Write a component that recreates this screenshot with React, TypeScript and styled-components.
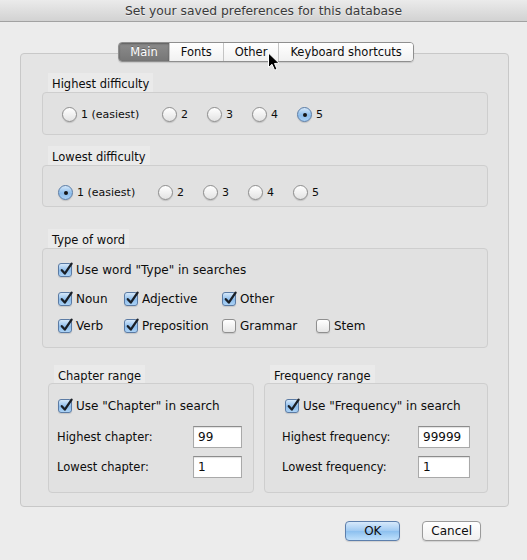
import styled, { createGlobalStyle, css } from 'styled-components';

// #region StyledComponents

const GlobalStyle = createGlobalStyle`
  *, *::before, *::after {
    box-sizing: border-box;
  }
  html, body {
    margin: 0;
    padding: 0;
    background: #ececec;
  }
  body {
    font-family: "DejaVu Sans", "Liberation Sans", sans-serif;
    color: #0d0d0d;
  }
`;

const WindowStyled = styled.div`
  position: relative;
  width: 527px;
  height: 560px;
  overflow: hidden;
  background: #ececec;
`;

const TitleBarStyled = styled.div`
  height: 22px;
  display: flex;
  align-items: center;
  justify-content: center;
  border-bottom: 1px solid #a2a2a2;
  background: linear-gradient(#ebebeb, #d2d2d2);
  font-size: 12.3px;
  color: #3a3a3a;
  text-shadow: 0 1px 0 rgba(255, 255, 255, 0.55);
`;

const ContentStyled = styled.div`
  padding: 20px 18px 0 20px;
`;

const TabStripStyled = styled.div`
  position: relative;
  z-index: 1;
  display: flex;
  justify-content: center;
  padding-left: 3px;
  margin-bottom: -9px;
`;

const TabGroupStyled = styled.div`
  display: flex;
  height: 20px;
  border: 1px solid #8f8f8f;
  border-radius: 4px;
  overflow: hidden;
  box-shadow: 0 1px 1px rgba(0, 0, 0, 0.12);
`;

const TabStyled = styled.div<{ $active?: boolean }>`
  padding: 0 11px;
  line-height: 18px;
  font-size: 11.5px;
  color: #0d0d0d;
  background: linear-gradient(#ffffff, #f1f1f1);
  & + & {
    border-left: 1px solid #c4c4c4;
  }
  ${(p) =>
    p.$active &&
    css`
      color: #fff;
      background: linear-gradient(#8c8c8c, #767676);
      box-shadow: inset 0 1px 2px rgba(0, 0, 0, 0.35);
      text-shadow: 0 -1px 0 rgba(0, 0, 0, 0.25);
    `}
`;

const TabBoxStyled = styled.div`
  border: 1px solid #c8c8c8;
  border-radius: 4px;
  background: #e4e4e4;
  padding: 19px 20px 13px 21px;
`;

const SectionStyled = styled.div<{ $gap?: number }>`
  display: flex;
  flex-direction: column;
  margin-top: ${(p) => p.$gap ?? 0}px;
`;

const GroupTitleStyled = styled.div<{ $height?: number; $indent?: number }>`
  align-self: flex-start;
  height: ${(p) => p.$height ?? 19}px;
  margin-left: ${(p) => p.$indent ?? 6}px;
  padding: 4px 4px 0;
  font-size: 11.5px;
  line-height: 15px;
  background: #eaeaea;
`;

const GroupBoxStyled = styled.div<{ $height: number }>`
  height: ${(p) => p.$height}px;
  border: 1px solid #cecece;
  border-radius: 4px;
  background: #e1e1e1;
`;

const RadioRowStyled = styled.div<{ $top: number; $left: number }>`
  display: grid;
  grid-template-columns: 100px 45px 45px 45px auto;
  align-items: center;
  height: 17px;
  margin-top: ${(p) => p.$top}px;
  padding-left: ${(p) => p.$left}px;
`;

const OptionStyled = styled.label<{ $size?: number }>`
  display: flex;
  align-items: center;
  gap: 4px;
  font-size: ${(p) => p.$size ?? 11}px;
  white-space: nowrap;
`;

const RadioStyled = styled.span<{ $on?: boolean }>`
  position: relative;
  flex: none;
  width: 15px;
  height: 15px;
  border-radius: 50%;
  border: 1px solid #8e8e8e;
  background: linear-gradient(#ffffff, #e3e3e3);
  box-shadow: 0 1px 1px rgba(0, 0, 0, 0.15);
  ${(p) =>
    p.$on &&
    css`
      border-color: #5a7ca6;
      background: linear-gradient(#d4e7f9, #8bbceb 55%, #a9d0f5);
      &::after {
        content: '';
        position: absolute;
        left: 4.5px;
        top: 4.5px;
        width: 4px;
        height: 4px;
        border-radius: 50%;
        background: #151515;
      }
    `}
`;

const CheckBoxStyled = styled.span<{ $on?: boolean }>`
  position: relative;
  flex: none;
  width: 14px;
  height: 14px;
  border-radius: 3px;
  border: 1px solid #8f8f8f;
  background: linear-gradient(#ffffff, #e6e6e6);
  box-shadow: 0 1px 1px rgba(0, 0, 0, 0.12);
  ${(p) =>
    p.$on &&
    css`
      border-color: #5b7ba4;
      background: linear-gradient(#d6e8f9, #8dbdec 55%, #acd2f5);
    `}
  svg {
    position: absolute;
    left: 0;
    top: -2px;
    overflow: visible;
  }
`;

const CheckBodyStyled = styled.div`
  display: flex;
  flex-direction: column;
  padding: 12px 0 0 15px;
`;

const CheckLineStyled = styled.div<{ $gap?: number; $left?: number }>`
  display: flex;
  align-items: center;
  height: 18px;
  margin-top: ${(p) => p.$gap ?? 0}px;
  padding-left: ${(p) => p.$left ?? 0}px;
`;

const CheckGridStyled = styled.div<{ $gap: number }>`
  display: grid;
  grid-template-columns: 66px 98px 94px auto;
  align-items: center;
  height: 18px;
  margin-top: ${(p) => p.$gap}px;
`;

const RangeRowStyled = styled.div`
  display: grid;
  grid-template-columns: 206px 224px;
  column-gap: 10px;
  margin-left: 6px;
  margin-top: 17px;
`;

const RangeBoxStyled = styled.div`
  height: 110px;
  padding-top: 13px;
  border: 1px solid #cecece;
  border-radius: 4px;
  background: #e1e1e1;
`;

const FieldRowStyled = styled.div<{ $gap: number; $left: number }>`
  display: grid;
  grid-template-columns: 136px auto;
  align-items: center;
  margin-top: ${(p) => p.$gap}px;
  padding-left: ${(p) => p.$left}px;
  font-size: 11.5px;
`;

const FieldStyled = styled.input<{ $width: number }>`
  width: ${(p) => p.$width}px;
  height: 22px;
  padding: 0 4px;
  border: 1px solid #a9a9a9;
  border-top-color: #8c8c8c;
  background: #fff;
  box-shadow: inset 0 1px 1px rgba(0, 0, 0, 0.12);
  font-family: inherit;
  font-size: 12px;
  color: #0d0d0d;
  outline: none;
`;

const ButtonRowStyled = styled.div`
  display: flex;
  justify-content: flex-end;
  gap: 22px;
  margin-top: 14px;
  padding-right: 28px;
`;

const ButtonStyled = styled.button<{ $primary?: boolean }>`
  height: 20px;
  min-width: 55px;
  padding: 0 8px;
  border: 1px solid #9b9b9b;
  border-radius: 4px;
  background: linear-gradient(#ffffff, #f0f0f0);
  box-shadow: 0 1px 1px rgba(0, 0, 0, 0.12);
  font-family: inherit;
  font-size: 12px;
  line-height: 18px;
  color: #0d0d0d;
  ${(p) =>
    p.$primary &&
    css`
      border-color: #5d7fac;
      background: linear-gradient(#d7e9fb, #9fcaf2 50%, #8cc0ef 51%, #bfe0fb);
    `}
`;

const CursorStyled = styled.svg`
  position: absolute;
  z-index: 2;
  left: 267px;
  top: 52px;
`;

// #endregion

const Radio = ({ label, on }: { label: string; on?: boolean }) => (
  <OptionStyled>
    <RadioStyled $on={on} />
    {label}
  </OptionStyled>
);

const Check = ({ label, on, size = 12 }: { label: string; on?: boolean; size?: number }) => (
  <OptionStyled $size={size}>
    <CheckBoxStyled $on={on}>
      {on && (
        <svg width="14" height="14" viewBox="0 0 14 14">
          <path d="M2.8 8.2 L5.8 11.6 L12.6 1.6" fill="none" stroke="#1a1f26" strokeWidth="2.3" strokeLinecap="round" strokeLinejoin="round" />
        </svg>
      )}
    </CheckBoxStyled>
    {label}
  </OptionStyled>
);

const levels = ['1 (easiest)', '2', '3', '4', '5'];

export default function App() {
  return (
    <WindowStyled>
      <GlobalStyle />
      <TitleBarStyled>Set your saved preferences for this database</TitleBarStyled>
      <ContentStyled>
        <TabStripStyled>
          <TabGroupStyled>
            <TabStyled $active>Main</TabStyled>
            <TabStyled>Fonts</TabStyled>
            <TabStyled>Other</TabStyled>
            <TabStyled>Keyboard shortcuts</TabStyled>
          </TabGroupStyled>
        </TabStripStyled>
        <TabBoxStyled>
          <SectionStyled>
            <GroupTitleStyled>Highest difficulty</GroupTitleStyled>
            <GroupBoxStyled $height={43}>
              <RadioRowStyled $top={13} $left={19}>
                {levels.map((l, i) => (
                  <Radio key={l} label={l} on={i === 4} />
                ))}
              </RadioRowStyled>
            </GroupBoxStyled>
          </SectionStyled>

          <SectionStyled $gap={11}>
            <GroupTitleStyled>Lowest difficulty</GroupTitleStyled>
            <GroupBoxStyled $height={42}>
              <RadioRowStyled $top={18} $left={15}>
                {levels.map((l, i) => (
                  <Radio key={l} label={l} on={i === 0} />
                ))}
              </RadioRowStyled>
            </GroupBoxStyled>
          </SectionStyled>

          <SectionStyled $gap={22}>
            <GroupTitleStyled>Type of word</GroupTitleStyled>
            <GroupBoxStyled $height={100}>
              <CheckBodyStyled>
                <CheckLineStyled>
                  <Check label={'Use word "Type" in searches'} on />
                </CheckLineStyled>
                <CheckGridStyled $gap={11}>
                  <Check label="Noun" on />
                  <Check label="Adjective" on />
                  <Check label="Other" on />
                </CheckGridStyled>
                <CheckGridStyled $gap={9}>
                  <Check label="Verb" on />
                  <Check label="Preposition" on />
                  <Check label="Grammar" />
                  <Check label="Stem" />
                </CheckGridStyled>
              </CheckBodyStyled>
            </GroupBoxStyled>
          </SectionStyled>

          <RangeRowStyled>
            <SectionStyled>
              <GroupTitleStyled $height={18} $indent={6}>Chapter range</GroupTitleStyled>
              <RangeBoxStyled>
                <CheckLineStyled $left={9}>
                  <Check label={'Use "Chapter" in search'} on />
                </CheckLineStyled>
                <FieldRowStyled $gap={11} $left={8}>
                  Highest chapter:
                  <FieldStyled $width={49} readOnly value="99" />
                </FieldRowStyled>
                <FieldRowStyled $gap={8} $left={8}>
                  Lowest chapter:
                  <FieldStyled $width={49} readOnly value="1" />
                </FieldRowStyled>
              </RangeBoxStyled>
            </SectionStyled>
            <SectionStyled>
              <GroupTitleStyled $height={18} $indent={6}>Frequency range</GroupTitleStyled>
              <RangeBoxStyled>
                <CheckLineStyled $left={20}>
                  <Check label={'Use "Frequency" in search'} on />
                </CheckLineStyled>
                <FieldRowStyled $gap={11} $left={17}>
                  Highest frequency:
                  <FieldStyled $width={52} readOnly value="99999" />
                </FieldRowStyled>
                <FieldRowStyled $gap={8} $left={17}>
                  Lowest frequency:
                  <FieldStyled $width={52} readOnly value="1" />
                </FieldRowStyled>
              </RangeBoxStyled>
            </SectionStyled>
          </RangeRowStyled>
        </TabBoxStyled>
        <ButtonRowStyled>
          <ButtonStyled $primary>OK</ButtonStyled>
          <ButtonStyled>Cancel</ButtonStyled>
        </ButtonRowStyled>
      </ContentStyled>
      <CursorStyled width="13" height="20" viewBox="0 0 13 20">
        <path d="M1.5 1 L1.5 15.5 L5 12.3 L7.6 18.2 L10 17.2 L7.5 11.5 L12 11.2 Z" fill="#000" stroke="#fff" strokeWidth="1" strokeLinejoin="round" />
      </CursorStyled>
    </WindowStyled>
  );
}
